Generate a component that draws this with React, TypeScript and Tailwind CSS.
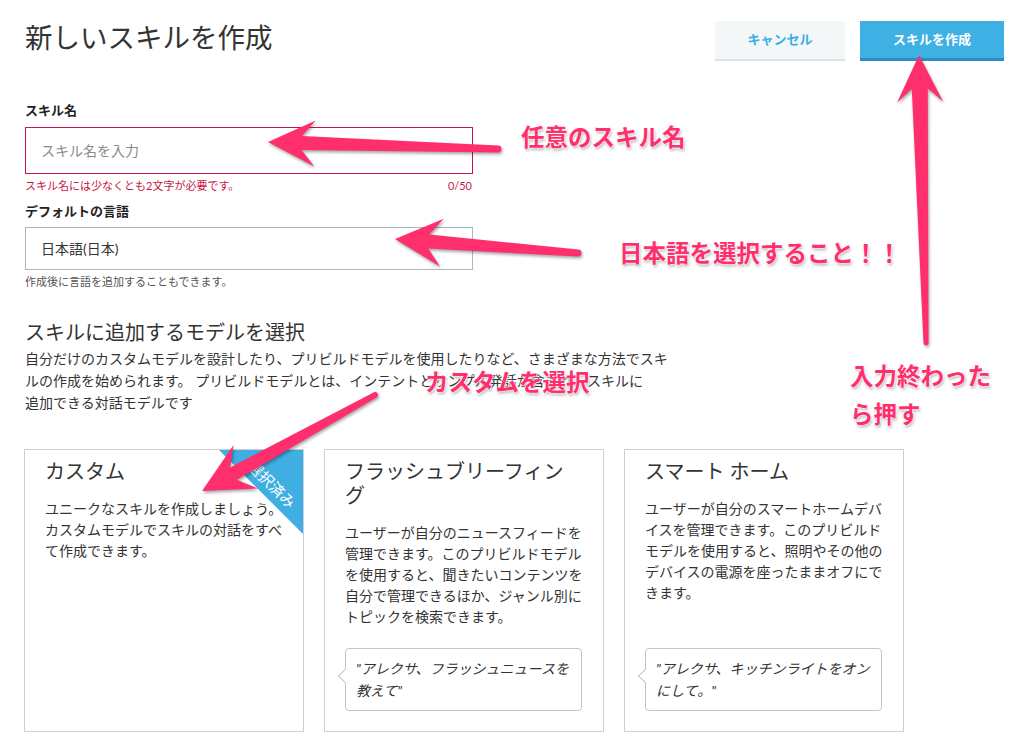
const PINK = '#ff2f6e';

// builds a tapered arrow outline from tail (x0,y0) to tip (x1,y1)
function arrowPath(x0: number, y0: number, x1: number, y1: number, hl: number, hw: number, sn: number, st: number) {
  const dx = x1 - x0;
  const dy = y1 - y0;
  const len = Math.hypot(dx, dy);
  const ux = dx / len;
  const uy = dy / len;
  const px = -uy;
  const py = ux;
  const bx = x1 - ux * hl;
  const by = y1 - uy * hl;
  const jx = x1 - ux * hl * 0.72;
  const jy = y1 - uy * hl * 0.72;
  const p = (x: number, y: number) => `${x.toFixed(1)},${y.toFixed(1)}`;
  const r = st / 2;
  return [
    `M${p(x0 + px * r, y0 + py * r)}`,
    `L${p(jx + (px * sn) / 2, jy + (py * sn) / 2)}`,
    `L${p(bx + px * hw, by + py * hw)}`,
    `L${p(x1, y1)}`,
    `L${p(bx - px * hw, by - py * hw)}`,
    `L${p(jx - (px * sn) / 2, jy - (py * sn) / 2)}`,
    `L${p(x0 - px * r, y0 - py * r)}`,
    `A${r},${r} 0 0 0 ${p(x0 + px * r, y0 + py * r)}`,
    'Z',
  ].join(' ');
}

const arrows = [
  arrowPath(498, 149, 268, 142, 47, 23, 14, 7),
  arrowPath(578, 253, 395, 239, 47, 24, 14, 7),
  arrowPath(375, 395, 202, 491, 50, 25, 14, 6),
  arrowPath(926, 343, 919, 55, 47, 23, 16, 5),
];

const note =
  "absolute font-bold text-[23.5px] leading-none text-[#ff2f6e] whitespace-nowrap [text-shadow:0_0_1px_#fff,0_0_2px_#fff,0_0_3px_#fff,1px_2px_3px_rgba(0,0,0,0.35)]";

const Bubble = ({ children }: { children: React.ReactNode }) => (
  <div className="mt-auto relative h-[63px] border border-[#c4c4c4] rounded-[4px] pl-[10px] pt-[9px] text-[14px] leading-[22px] italic text-[#333] whitespace-nowrap bg-white">
    <span className="absolute -left-[6px] top-[22px] w-[10px] h-[10px] rotate-45 bg-white border-l border-b border-[#c4c4c4]" />
    {children}
  </div>
);

const Card = ({
  title,
  lines,
  selected,
  quote,
}: {
  title: React.ReactNode;
  lines: string[];
  selected?: boolean;
  quote?: React.ReactNode;
}) => (
  <div className="relative w-[280px] h-[283px] border border-[#cfcfcf] pl-[20px] pr-[21px] pt-[9px] pb-[20px] flex flex-col">
    {selected && (
      <div className="absolute top-0 right-0 w-[84px] h-[84px]">
        <svg width="84" height="84" viewBox="0 0 84 84" className="absolute inset-0">
          <polygon points="0,0 84,0 84,84" fill="#3eaee3" />
        </svg>
        <span className="absolute left-[19px] top-[25px] w-[68px] text-center text-[15px] leading-[18px] text-white rotate-45">
          選択済み
        </span>
      </div>
    )}
    <div className="relative text-[20px] leading-[24px] text-[#333]">{title}</div>
    <div className="relative mt-[15px] text-[14px] leading-[21px] text-[#333] whitespace-nowrap">
      {lines.map((l, i) => (
        <div key={i}>{l}</div>
      ))}
    </div>
    {quote && <Bubble>{quote}</Bubble>}
  </div>
);

export default function App() {
  return (
    <div className="relative w-[1009px] h-[746px] overflow-hidden bg-white font-['Lato','Noto_Sans_CJK_JP','Noto_Sans_CJK_SC',sans-serif]">
      <div className="pl-[25px] pr-[5px] pt-[21px]">
        {/* header */}
        <div className="flex justify-between items-start">
          <h1 className="text-[27.5px] leading-[34px] text-[#333]">新しいスキルを作成</h1>
          <div className="flex gap-[15px]">
            <button className="w-[130px] h-[40px] bg-[#f3f7f8] border-b-2 border-[#d8e6ea] text-[13px] font-bold text-[#3aaee2]">
              キャンセル
            </button>
            <button className="w-[144px] h-[40px] bg-[#3eb0e4] border-b-[3px] border-[#2a8fc4] text-[13px] font-bold text-white">
              スキルを作成
            </button>
          </div>
        </div>

        {/* form */}
        <div className="w-[448px]">
          <div className="mt-[40px] text-[13px] leading-[18px] font-bold text-[#222]">スキル名</div>
          <div className="mt-[8px] h-[47px] border border-[#c8173f] flex items-center px-[15px] text-[14px] text-[#8a8a8a]">
            スキル名を入力
          </div>
          <div className="mt-[4px] flex justify-between pr-[1px] text-[11px] leading-[16px] text-[#c8173f]">
            <span>スキル名には少なくとも2文字が必要です。</span>
            <span>0/50</span>
          </div>
          <div className="mt-[8px] text-[13px] leading-[18px] font-bold text-[#222]">デフォルトの言語</div>
          <div className="mt-[7px] h-[43px] border border-[#a9b8bc] flex items-center px-[15px] text-[14px] text-[#333]">
            日本語(日本)
          </div>
          <div className="mt-[4px] text-[11px] leading-[16px] text-[#555]">作成後に言語を追加することもできます。</div>
        </div>

        <h2 className="mt-[28px] text-[20px] leading-[28px] text-[#333]">スキルに追加するモデルを選択</h2>
        <p className="mt-[2px] text-[14px] leading-[22px] text-[#333] whitespace-nowrap">
          自分だけのカスタムモデルを設計したり、プリビルドモデルを使用したりなど、さまざまな方法でスキ
          <br />
          ルの作成を始められます。 プリビルドモデルとは、インテントとサンプル発話が含まれ、スキルに
          <br />
          追加できる対話モデルです
        </p>

        <div className="mt-[35px] -ml-[1px] flex gap-[20px]">
          <Card
            selected
            title="カスタム"
            lines={['ユニークなスキルを作成しましょう。', 'カスタムモデルでスキルの対話をすべ', 'て作成できます。']}
          />
          <Card
            title={
              <>
                フラッシュブリーフィン
                <br />グ
              </>
            }
            lines={[
              'ユーザーが自分のニュースフィードを',
              '管理できます。このプリビルドモデル',
              'を使用すると、聞きたいコンテンツを',
              '自分で管理できるほか、ジャンル別に',
              'トピックを検索できます。',
            ]}
            quote={
              <>
                "アレクサ、フラッシュニュースを
                <br />
                教えて"
              </>
            }
          />
          <Card
            title="スマート ホーム"
            lines={[
              'ユーザーが自分のスマートホームデバ',
              'イスを管理できます。このプリビルド',
              'モデルを使用すると、照明やその他の',
              'デバイスの電源を座ったままオフにで',
              'きます。',
            ]}
            quote={
              <>
                "アレクサ、キッチンライトをオン
                <br />
                にして。"
              </>
            }
          />
        </div>
      </div>

      {/* annotations */}
      <svg
        width="1009"
        height="746"
        viewBox="0 0 1009 746"
        className="absolute inset-0 pointer-events-none drop-shadow-[1px_2px_1.5px_rgba(0,0,0,0.35)]"
      >
        {arrows.map((d, i) => (
          <path key={i} d={d} fill={PINK} />
        ))}
      </svg>
      <div className={`${note} left-[521px] top-[126px]`}>任意のスキル名</div>
      <div className={`${note} left-[619px] top-[242px]`}>日本語を選択すること！！</div>
      <div className={`${note} left-[425px] top-[371px]`}>カスタムを選択</div>
      <div className={`${note} left-[850px] top-[365px]`}>入力終わった</div>
      <div className={`${note} left-[850px] top-[403px]`}>ら押す</div>
    </div>
  );
}
